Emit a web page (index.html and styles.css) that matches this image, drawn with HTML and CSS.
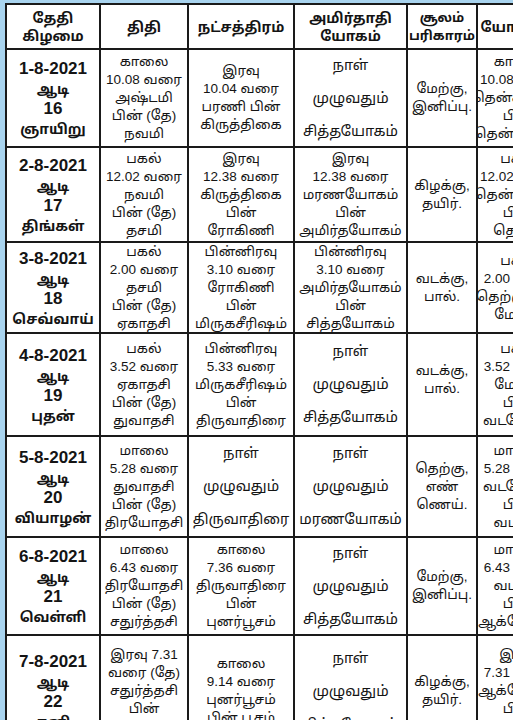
FILE: index.html
```html
<!DOCTYPE html>
<html lang="ta">
<head>
<meta charset="utf-8">
<title>ஆடி மாத பஞ்சாங்கம்</title>
<link rel="stylesheet" href="styles.css">
</head>
<body>
<div class="page">
  <div class="table">
    <div class="cell head">தேதி<br>கிழமை</div>
    <div class="cell head">திதி</div>
    <div class="cell head">நட்சத்திரம்</div>
    <div class="cell head">அமிர்தாதி<br>யோகம்</div>
    <div class="cell head sm">சூலம்<br>பரிகாரம்</div>
    <div class="cell head">யோகினி</div>

    <div class="cell date"><div>1-8-2021</div><div class="ta">ஆடி</div><div>16</div><div class="ta">ஞாயிறு</div></div>
    <div class="cell">காலை<br>10.08 வரை<br>அஷ்டமி<br>பின் (தே)<br>நவமி</div>
    <div class="cell">இரவு<br>10.04 வரை<br>பரணி பின்<br>கிருத்திகை</div>
    <div class="cell wide">நாள்<br>முழுவதும்<br>சித்தயோகம்</div>
    <div class="cell">மேற்கு,<br>இனிப்பு.</div>
    <div class="cell">காலை<br>10.08 வரை<br>தென்கிழக்கு<br>பின்<br>தென்மேற்கு</div>

    <div class="cell date"><div>2-8-2021</div><div class="ta">ஆடி</div><div>17</div><div class="ta">திங்கள்</div></div>
    <div class="cell">பகல்<br>12.02 வரை<br>நவமி<br>பின் (தே)<br>தசமி</div>
    <div class="cell">இரவு<br>12.38 வரை<br>கிருத்திகை<br>பின்<br>ரோகிணி</div>
    <div class="cell">இரவு<br>12.38 வரை<br>மரணயோகம்<br>பின்<br>அமிர்தயோகம்</div>
    <div class="cell">கிழக்கு,<br>தயிர்.</div>
    <div class="cell">பகல்<br>12.02 வரை<br>தென்மேற்கு<br>பின்<br>தெற்கு</div>

    <div class="cell date"><div>3-8-2021</div><div class="ta">ஆடி</div><div>18</div><div class="ta">செவ்வாய்</div></div>
    <div class="cell">பகல்<br>2.00 வரை<br>தசமி<br>பின் (தே)<br>ஏகாதசி</div>
    <div class="cell">பின்னிரவு<br>3.10 வரை<br>ரோகிணி<br>பின்<br>மிருகசீரிஷம்</div>
    <div class="cell">பின்னிரவு<br>3.10 வரை<br>அமிர்தயோகம்<br>பின்<br>சித்தயோகம்</div>
    <div class="cell">வடக்கு,<br>பால்.</div>
    <div class="cell">பகல்<br>2.00 வரை<br>தெற்கு பின்<br>மேற்கு</div>

    <div class="cell date"><div>4-8-2021</div><div class="ta">ஆடி</div><div>19</div><div class="ta">புதன்</div></div>
    <div class="cell">பகல்<br>3.52 வரை<br>ஏகாதசி<br>பின் (தே)<br>துவாதசி</div>
    <div class="cell">பின்னிரவு<br>5.33 வரை<br>மிருகசீரிஷம்<br>பின்<br>திருவாதிரை</div>
    <div class="cell wide">நாள்<br>முழுவதும்<br>சித்தயோகம்</div>
    <div class="cell top">வடக்கு,<br>பால்.</div>
    <div class="cell">பகல்<br>3.52 வரை<br>மேற்கு<br>பின்<br>வடமேற்கு</div>

    <div class="cell date"><div>5-8-2021</div><div class="ta">ஆடி</div><div>20</div><div class="ta">வியாழன்</div></div>
    <div class="cell">மாலை<br>5.28 வரை<br>துவாதசி<br>பின் (தே)<br>திரயோதசி</div>
    <div class="cell wide">நாள்<br>முழுவதும்<br>திருவாதிரை</div>
    <div class="cell wide">நாள்<br>முழுவதும்<br>மரணயோகம்</div>
    <div class="cell">தெற்கு,<br>எண்<br>ணெய்.</div>
    <div class="cell">மாலை<br>5.28 வரை<br>வடமேற்கு<br>பின்<br>வடக்கு</div>

    <div class="cell date"><div>6-8-2021</div><div class="ta">ஆடி</div><div>21</div><div class="ta">வெள்ளி</div></div>
    <div class="cell">மாலை<br>6.43 வரை<br>திரயோதசி<br>பின் (தே)<br>சதுர்த்தசி</div>
    <div class="cell">காலை<br>7.36 வரை<br>திருவாதிரை<br>பின்<br>புனர்பூசம்</div>
    <div class="cell wide">நாள்<br>முழுவதும்<br>சித்தயோகம்</div>
    <div class="cell">மேற்கு,<br>இனிப்பு.</div>
    <div class="cell">மாலை<br>6.43 வரை<br>வடக்கு<br>பின்<br>ஆக்னேயம்</div>

    <div class="cell date"><div>7-8-2021</div><div class="ta">ஆடி</div><div>22</div><div class="ta">சனி</div></div>
    <div class="cell">இரவு 7.31<br>வரை (தே)<br>சதுர்த்தசி<br>பின்<br>அமாவாசை</div>
    <div class="cell">காலை<br>9.14 வரை<br>புனர்பூசம்<br>பின் பூசம்</div>
    <div class="cell wide">நாள்<br>முழுவதும்<br>சித்தயோகம்</div>
    <div class="cell">கிழக்கு,<br>தயிர்.</div>
    <div class="cell">இரவு<br>7.31 வரை<br>ஆக்னேயம்<br>பின்<br>கிழக்கு</div>
  </div>
</div>
</body>
</html>
```

FILE: styles.css
```css
html, body {
  margin: 0;
  padding: 0;
}

body {
  background: #a9d4ef;
  width: 513px;
  height: 720px;
  overflow: hidden;
  font-family: "Liberation Sans", "Noto Sans Tamil", "Lohit Tamil", "Noto Sans", sans-serif;
  color: #141414;
}

.page {
  padding: 3px 0 0 5px;
}

.table {
  display: grid;
  grid-template-columns: 92px 86px 104px 111px 68px 80px;
  grid-template-rows: 43px 96px 93px 89px 101px 99px 96px 110px;
  gap: 2px;
  padding: 2px;
  background: #1a1a1a;
  width: max-content;
}

.cell {
  background: #ffffff;
  display: flex;
  align-items: center;
  justify-content: center;
  text-align: center;
  font-size: 13.5px;
  line-height: 18px;
  overflow: hidden;
  white-space: nowrap;
}

.head {
  font-weight: bold;
  font-size: 14px;
  line-height: 18px;
}

.head.sm {
  font-size: 13px;
}

.date {
  flex-direction: column;
  font-weight: bold;
  font-size: 17px;
  line-height: 20px;
  padding-top: 2px;
}

.date .ta {
  font-size: 14px;
}

.wide {
  line-height: 33px;
  font-size: 14.5px;
}

.top {
  align-items: flex-start;
  padding-top: 28px;
}
```
